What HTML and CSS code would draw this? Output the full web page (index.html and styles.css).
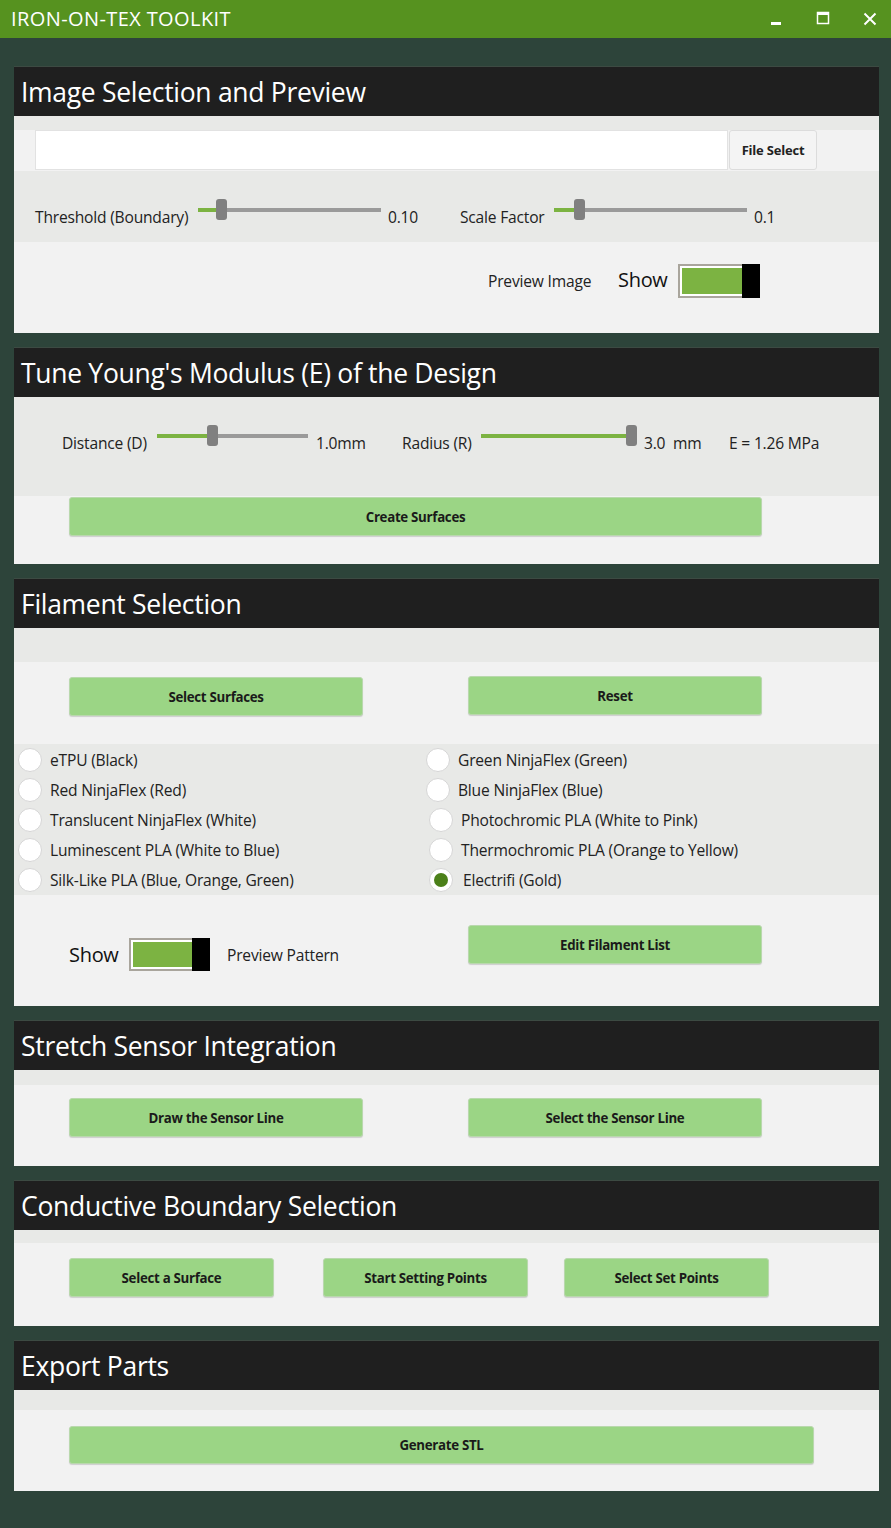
FILE: index.html
```html
<!DOCTYPE html>
<html lang="en">
<head>
<meta charset="utf-8">
<title>Iron-On-Tex Toolkit</title>
<link rel="stylesheet" href="styles.css">
</head>
<body>
<header class="titlebar">
  <span class="app-title">IRON-ON-TEX TOOLKIT</span>
  <div class="win-ctrls">
    <svg class="wc wc-min" width="12" height="12" viewBox="0 0 12 12"><rect x="1" y="8" width="10" height="3" fill="#fff"/></svg>
    <svg class="wc wc-max" width="14" height="14" viewBox="0 0 14 14"><rect x="1.5" y="1.5" width="11" height="11" fill="none" stroke="#fff" stroke-width="1.5"/><rect x="1" y="1" width="12" height="3" fill="#fff"/></svg>
    <svg class="wc wc-close" width="14" height="14" viewBox="0 0 14 14"><path d="M1.5 1.5 L12.5 12.5 M12.5 1.5 L1.5 12.5" stroke="#fff" stroke-width="2" fill="none"/></svg>
  </div>
</header>

<main class="sections">
  <section class="panel">
    <h2 class="panel-head">Image Selection and Preview</h2>
    <div class="panel-body body-1">
      <div class="band band-14"></div>
      <div class="row file-row">
        <div class="file-path"></div>
        <button class="file-btn">File Select</button>
      </div>
      <div class="row grey slider-row-1">
        <span class="txt lbl w163">Threshold (Boundary)</span>
        <div class="slider w183"><span class="fill" style="width:18px"></span><span class="thumb"></span><span class="rest"></span></div>
        <span class="txt val w72">0.10</span>
        <span class="txt lbl w94">Scale Factor</span>
        <div class="slider w193"><span class="fill" style="width:20px"></span><span class="thumb"></span><span class="rest"></span></div>
        <span class="txt val">0.1</span>
      </div>
      <div class="row preview-row">
        <span class="txt w130">Preview Image</span>
        <span class="show w60">Show</span>
        <div class="toggle w82"><span class="tg-track"><span class="tg-fill"></span></span><span class="tg-knob"></span></div>
      </div>
    </div>
  </section>

  <section class="panel">
    <h2 class="panel-head">Tune Young's Modulus (E) of the Design</h2>
    <div class="panel-body body-2">
      <div class="row grey slider-row-2">
        <span class="txt lbl w95">Distance (D)</span>
        <div class="slider w151"><span class="fill" style="width:50px"></span><span class="thumb"></span><span class="rest"></span></div>
        <span class="txt val w86">1.0mm</span>
        <span class="txt lbl w79">Radius (R)</span>
        <div class="slider w156"><span class="fill" style="width:145px"></span><span class="thumb"></span></div>
        <span class="txt val w85">3.0&nbsp; mm</span>
        <span class="txt val">E = 1.26 MPa</span>
      </div>
      <div class="row btn-row-2">
        <button class="gbtn w693">Create Surfaces</button>
      </div>
    </div>
  </section>

  <section class="panel">
    <h2 class="panel-head">Filament Selection</h2>
    <div class="panel-body body-3">
      <div class="band band-34"></div>
      <div class="row btn-row-3">
        <button class="gbtn w294">Select Surfaces</button>
        <button class="gbtn w294 shift-up">Reset</button>
      </div>
      <div class="radio-grid grey">
        <label class="radio"><span class="dot"></span><span class="txt">eTPU (Black)</span></label>
        <label class="radio"><span class="dot"></span><span class="txt">Green NinjaFlex (Green)</span></label>
        <label class="radio"><span class="dot"></span><span class="txt">Red NinjaFlex (Red)</span></label>
        <label class="radio"><span class="dot"></span><span class="txt">Blue NinjaFlex (Blue)</span></label>
        <label class="radio"><span class="dot"></span><span class="txt">Translucent NinjaFlex (White)</span></label>
        <label class="radio nudge"><span class="dot"></span><span class="txt">Photochromic PLA (White to Pink)</span></label>
        <label class="radio"><span class="dot"></span><span class="txt">Luminescent PLA (White to Blue)</span></label>
        <label class="radio nudge"><span class="dot"></span><span class="txt">Thermochromic PLA (Orange to Yellow)</span></label>
        <label class="radio"><span class="dot"></span><span class="txt">Silk-Like PLA (Blue, Orange, Green)</span></label>
        <label class="radio nudge checked"><span class="dot"></span><span class="txt">Electrifi (Gold)</span></label>
      </div>
      <div class="row pattern-row">
        <div class="pattern-group">
          <span class="show w60">Show</span>
          <div class="toggle w81"><span class="tg-track"><span class="tg-fill"></span></span><span class="tg-knob"></span></div>
          <span class="txt pattern-lbl">Preview Pattern</span>
        </div>
        <button class="gbtn w294">Edit Filament List</button>
      </div>
    </div>
  </section>

  <section class="panel">
    <h2 class="panel-head">Stretch Sensor Integration</h2>
    <div class="panel-body body-4">
      <div class="band band-15"></div>
      <div class="row btn-row-4">
        <button class="gbtn w294">Draw the Sensor Line</button>
        <button class="gbtn w294">Select the Sensor Line</button>
      </div>
    </div>
  </section>

  <section class="panel">
    <h2 class="panel-head">Conductive Boundary Selection</h2>
    <div class="panel-body body-5">
      <div class="band band-13"></div>
      <div class="row btn-row-5">
        <button class="gbtn w205">Select a Surface</button>
        <button class="gbtn w205 gap49">Start Setting Points</button>
        <button class="gbtn w205 gap36">Select Set Points</button>
      </div>
    </div>
  </section>

  <section class="panel">
    <h2 class="panel-head">Export Parts</h2>
    <div class="panel-body body-6">
      <div class="band band-20"></div>
      <div class="row btn-row-6">
        <button class="gbtn w745">Generate STL</button>
      </div>
    </div>
  </section>
</main>
</body>
</html>
```

FILE: styles.css
```css
* { box-sizing: border-box; }

html, body {
  margin: 0;
  padding: 0;
}

body {
  width: 891px;
  height: 1528px;
  background: #2d443a;
  font-family: "Open Sans", "Noto Sans", sans-serif;
  color: #1e1e1e;
  overflow: hidden;
}

/* Title bar */
.titlebar {
  height: 38px;
  background: #56921f;
  display: flex;
  align-items: center;
  padding: 0 0 0 11px;
}

.app-title {
  color: #fff;
  font-size: 20px;
  letter-spacing: 0.4px;
  line-height: 38px;
  flex: 1;
}

.win-ctrls {
  display: flex;
  align-items: center;
  height: 38px;
}

.wc { display: block; }
.wc-min { margin-right: 34px; margin-top: 2px; }
.wc-max { margin-right: 33px; margin-top: -2px; }
.wc-close { margin-right: 14px; margin-top: -1px; }

/* Sections */
.sections {
  display: flex;
  flex-direction: column;
  gap: 14px;
  padding: 28px 12px 0 14px;
}

.panel {
  background: #f2f2f2;
}

.panel-head {
  margin: 0;
  height: 50px;
  background: #1f1f1f;
  border-top: 1px solid #3c4a42;
  color: #fff;
  font-weight: 400;
  font-size: 26.5px;
  letter-spacing: -0.3px;
  line-height: 50px;
  padding-left: 7px;
}

.panel-body { display: flex; flex-direction: column; }
.body-1 { height: 217px; }
.body-2 { height: 167px; }
.body-3 { height: 378px; }
.body-4 { height: 96px; }
.body-5 { height: 96px; }
.body-6 { height: 101px; }

.band { background: #e8e9e7; }
.band-13 { height: 13px; }
.band-14 { height: 14px; }
.band-15 { height: 15px; }
.band-20 { height: 20px; }
.band-34 { height: 34px; }

.row {
  display: flex;
  align-items: flex-start;
}
.grey { background: #e8e9e7; }

.txt {
  font-size: 15.6px;
  line-height: 20px;
  color: #222;
  white-space: nowrap;
  letter-spacing: -0.2px;
}

.lbl, .val { margin-top: 8px; }

/* widths */
.w60 { width: 60px; flex: none; }
.w72 { width: 72px; flex: none; }
.w79 { width: 79px; flex: none; }
.w81 { width: 81px; flex: none; }
.w82 { width: 82px; flex: none; }
.w85 { width: 85px; flex: none; }
.w86 { width: 86px; flex: none; }
.w94 { width: 94px; flex: none; }
.w95 { width: 95px; flex: none; }
.w130 { width: 130px; flex: none; }
.w151 { width: 151px; flex: none; }
.w156 { width: 156px; flex: none; }
.w163 { width: 163px; flex: none; }
.w183 { width: 183px; flex: none; }
.w193 { width: 193px; flex: none; }
.w205 { width: 205px; flex: none; }
.w294 { width: 294px; flex: none; }
.w693 { width: 693px; flex: none; }
.w745 { width: 745px; flex: none; }

/* File row */
.file-row {
  height: 41px;
  padding-left: 21px;
  background: #f2f2f2;
}
.file-path {
  width: 693px;
  height: 40px;
  background: #fff;
  border: 1px solid #e2e2e2;
}
.file-btn {
  width: 88px;
  height: 40px;
  margin-left: 1px;
  background: #f4f4f4;
  border: 1px solid #dcdcdc;
  border-radius: 3px;
  font-family: inherit;
  font-size: 13px;
  font-weight: 700;
  color: #222;
  padding: 0;
  letter-spacing: -0.2px;
}

/* Sliders */
.slider {
  display: flex;
  align-items: center;
  height: 21px;
}
.slider .fill {
  height: 4px;
  background: #7cb342;
  flex: none;
}
.slider .thumb {
  width: 11px;
  height: 21px;
  background: #808080;
  border-radius: 3px;
  flex: none;
}
.slider .rest {
  height: 4px;
  background: #9a9a9a;
  flex: 1;
}
.slider-row-1 {
  height: 71px;
  padding: 28px 0 0 21px;
}
.slider-row-1 .slider { margin-right: 7px; }

.slider-row-2 {
  height: 99px;
  padding: 28px 0 0 48px;
}
.slider-row-2 .slider { margin-right: 8px; }
.slider-row-2 .w156 { margin-right: 7px; }

/* Toggle rows */
.preview-row {
  flex: 1;
  padding: 22px 0 0 474px;
  align-items: center;
  align-self: stretch;
}
.preview-row > * { align-self: flex-start; }
.preview-row .txt { margin-top: 7px; }
.preview-row .show { margin-top: 2px; }

.show {
  font-size: 20px;
  line-height: 28px;
  color: #111;
  letter-spacing: -0.3px;
}

.toggle {
  display: flex;
  height: 34px;
}
.w81.toggle { height: 33px; }
.tg-track {
  flex: 1;
  display: flex;
  border: 2px solid #a9a59c;
  border-right: none;
  background: #fff;
  padding: 2px 0 2px 2px;
}
.tg-fill {
  flex: 1;
  background: #7cb342;
}
.tg-knob {
  width: 18px;
  background: #000;
  flex: none;
}

/* Green buttons */
.gbtn {
  height: 39px;
  background: #9bd585;
  border: 1px solid #b9d8ad;
  border-radius: 3px;
  box-shadow: 0 1px 1px rgba(0,0,0,0.15);
  font-family: inherit;
  font-size: 13.3px;
  font-weight: 700;
  color: #1a1a1a;
  letter-spacing: -0.3px;
  padding: 0;
  flex: none;
}

.btn-row-2 {
  flex: 1;
  padding: 1px 0 0 55px;
}
.btn-row-3 {
  height: 82px;
  padding: 15px 0 0 55px;
  gap: 105px;
}
.shift-up { margin-top: -1px; }

/* Radios */
.radio-grid {
  height: 151px;
  display: grid;
  grid-template-columns: 408px 1fr;
  grid-auto-rows: 30px;
  padding: 1px 0 0 4px;
}
.radio {
  display: flex;
  align-items: center;
  gap: 8px;
}
.radio .dot {
  width: 24px;
  height: 24px;
  border-radius: 50%;
  background: #fff;
  border: 1px solid #d6d6d6;
  flex: none;
  display: flex;
  align-items: center;
  justify-content: center;
}
.radio.nudge { padding-left: 3px; }
.radio.checked .dot::after {
  content: "";
  width: 14px;
  height: 14px;
  border-radius: 50%;
  background: #4b8019;
}
.radio.checked .txt { margin-left: 2px; }

.pattern-row {
  flex: 1;
  padding: 30px 0 0 55px;
}
.pattern-group {
  width: 399px;
  display: flex;
  align-items: center;
  margin-top: 13px;
  flex: none;
}
.pattern-lbl { margin-left: 17px; }

.btn-row-4 {
  flex: 1;
  padding: 13px 0 0 55px;
  gap: 105px;
}
.btn-row-5 {
  flex: 1;
  padding: 15px 0 0 55px;
}
.gap49 { margin-left: 49px; }
.gap36 { margin-left: 36px; }

.btn-row-6 {
  flex: 1;
  padding: 16px 0 0 55px;
}
.btn-row-6 .gbtn { height: 38px; }
```
